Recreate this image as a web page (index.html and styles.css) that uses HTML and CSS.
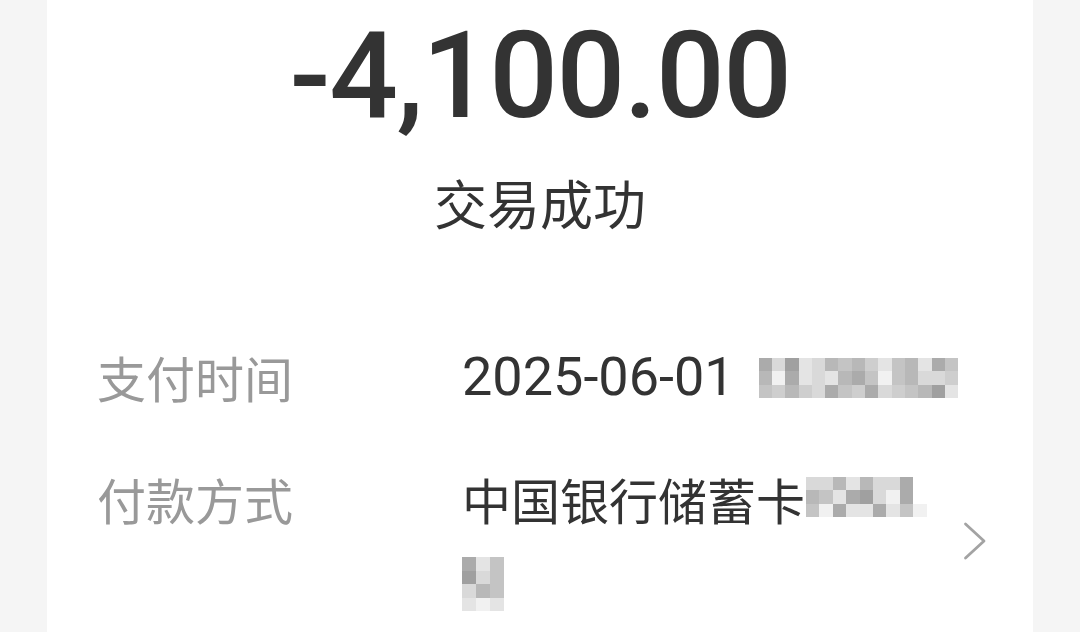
FILE: index.html
```html
<!DOCTYPE html>
<html lang="zh-CN">
<head>
<meta charset="utf-8">
<link rel="stylesheet" href="styles.css">
</head>
<body>
<div class="card">
  <div class="amount">-4,100.00</div>
  <div class="status">交易成功</div>
  <div class="info">
    <div class="row row-time">
      <div class="label">支付时间</div>
      <div class="value">
        <span class="date">2025-06-01</span>
        <span class="mosaic m-time">
          <i class="c3"></i><i class="c7"></i><i class="c2"></i><i class="c8"></i><i class="c7"></i><i class="c4"></i><i class="c5"></i><i class="c4"></i><i class="c6"></i><i class="c8"></i><i class="c5"></i><i class="c4"></i><i class="c8"></i><i class="c3"></i><i class="c5"></i>
          <i class="c4"></i><i class="c9"></i><i class="c3"></i><i class="c8"></i><i class="c7"></i><i class="c8"></i><i class="c4"></i><i class="c3"></i><i class="c5"></i><i class="c9"></i><i class="c5"></i><i class="c4"></i><i class="c7"></i><i class="c7"></i><i class="c6"></i>
          <i class="c5"></i><i class="c6"></i><i class="c4"></i><i class="c6"></i><i class="c7"></i><i class="c3"></i><i class="c5"></i><i class="c6"></i><i class="c3"></i><i class="c7"></i><i class="c6"></i><i class="c5"></i><i class="c4"></i><i class="c2"></i><i class="c8"></i>
        </span>
      </div>
    </div>
    <div class="row row-pay">
      <div class="label">付款方式</div>
      <div class="value">
        <div class="line">
          <span class="bank">中国银行储蓄卡</span><span class="mosaic m-card">
            <i class="c7"></i><i class="c7"></i><i class="c4"></i><i class="c8"></i><i class="c4"></i><i class="c7"></i><i class="c7"></i><i class="c3"></i><i class="c0"></i>
            <i class="c4"></i><i class="c5"></i><i class="c8"></i><i class="c3"></i><i class="c2"></i><i class="c7"></i><i class="c9"></i><i class="c3"></i><i class="c0"></i>
            <i class="c5"></i><i class="c9"></i><i class="c3"></i><i class="c8"></i><i class="c8"></i><i class="c3"></i><i class="c8"></i><i class="c5"></i><i class="c9"></i>
          </span>
        </div>
        <div class="line">
          <span class="mosaic m-tail">
            <i class="c3"></i><i class="c8"></i><i class="c5"></i>
            <i class="c2"></i><i class="c7"></i><i class="c5"></i>
            <i class="c7"></i><i class="c4"></i><i class="c5"></i>
            <i class="c8"></i><i class="c9"></i><i class="c8"></i>
          </span>
        </div>
      </div>
      <svg class="chevron" viewBox="0 0 24 38" width="24" height="38" aria-hidden="true">
        <path d="M2.5 2 L21 19 L2.5 36" fill="none" stroke="#a3a3a3" stroke-width="2.8" stroke-linecap="round" stroke-linejoin="round"/>
      </svg>
    </div>
  </div>
</div>
</body>
</html>
```
FILE: styles.css
```css
html, body {
  margin: 0;
  padding: 0;
  background: #f5f5f5;
  overflow: hidden;
}
body {
  width: 1080px;
  height: 632px;
  font-family: "Noto Sans CJK SC", "Noto Sans", sans-serif;
}
.card {
  margin: 0 47px;
  height: 632px;
  background: #ffffff;
  display: flex;
  flex-direction: column;
}
.amount {
  font-family: Roboto, "Noto Sans", sans-serif;
  font-weight: 500;
  font-size: 121px;
  line-height: 1;
  letter-spacing: -1.5px;
  color: #333333;
  text-align: center;
  margin-top: 16px;
}
.status {
  font-size: 53px;
  line-height: 70px;
  color: #333333;
  text-align: center;
  margin-top: 30px;
}
.info {
  padding: 0 46px 0 50px;
  margin-top: 101px;
  display: flex;
  flex-direction: column;
  gap: 44px;
}
.row {
  display: flex;
  align-items: flex-start;
}
.label {
  width: 365px;
  flex: none;
  font-size: 49px;
  line-height: 78px;
  color: #999999;
}
.value {
  flex: 1;
  font-size: 49px;
  line-height: 78px;
  color: #333333;
}
.date {
  font-family: Roboto, "Noto Sans", sans-serif;
  font-size: 54px;
  line-height: 78px;
}
.line {
  height: 78px;
  display: flex;
  align-items: center;
}
.row-time .value {
  display: flex;
  align-items: center;
  gap: 24px;
  height: 78px;
}
.mosaic {
  display: inline-grid;
}
.mosaic i {
  display: block;
}
.m-time {
  grid-template-columns: repeat(15, 13.3px);
  grid-auto-rows: 13.3px;
  margin-top: 2px;
}
.m-card {
  grid-template-columns: repeat(9, 13.4px);
  grid-auto-rows: 13.3px;
  margin-left: 1px;
  margin-top: -4px;
}
.m-tail {
  grid-template-columns: repeat(3, 14px);
  grid-auto-rows: 13.5px;
  margin-top: 14px;
}
.c0 { background: transparent; }
.c2 { background: #a0a0a0; }
.c3 { background: #ababab; }
.c4 { background: #b8b8b8; }
.c5 { background: #c4c4c4; }
.c6 { background: #cecece; }
.c7 { background: #d9d9d9; }
.c8 { background: #e4e4e4; }
.c9 { background: #f1f1f1; }
.chevron {
  flex: none;
  align-self: center;
  margin-top: 6px;
}
```
